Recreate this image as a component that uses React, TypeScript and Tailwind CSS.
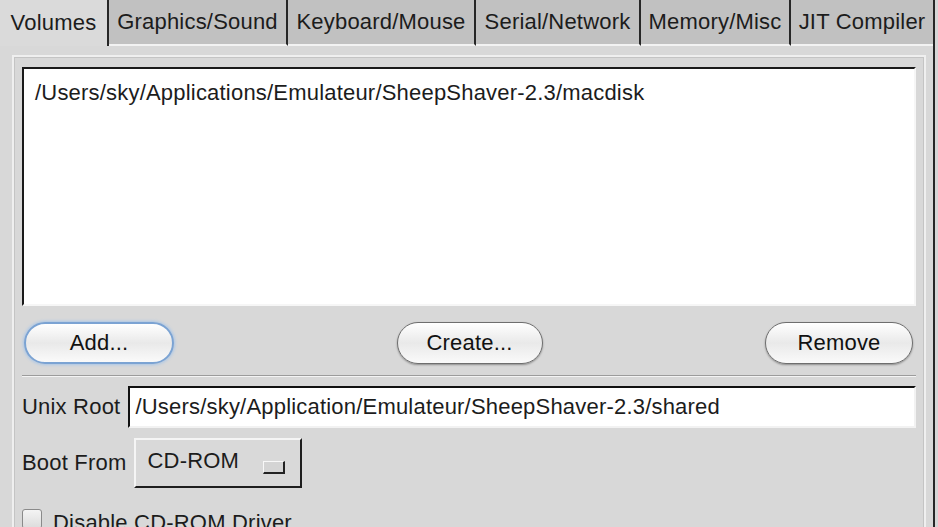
import React from "react";

const tabs = [
  { label: "Volumes", w: "w-[109px]", active: true },
  { label: "Graphics/Sound", w: "w-[179px]" },
  { label: "Keyboard/Mouse", w: "w-[188px]" },
  { label: "Serial/Network", w: "w-[165px]" },
  { label: "Memory/Misc", w: "w-[150px]" },
  { label: "JIT Compiler", w: "w-[142px]", last: true },
];

function AquaButton({
  label,
  focused,
  width,
}: {
  label: string;
  focused?: boolean;
  width: string;
}) {
  return (
    <div
      className={`${width} h-[42px] rounded-full flex items-center justify-center bg-gradient-to-b from-[#ffffff] via-[#e9e9e9] to-[#fafafa] ${
        focused
          ? "border-2 border-[#7ba3d3] shadow-[0_0_3px_1px_#a9c6e8]"
          : "border border-[#6e6e6e] shadow-[0_1px_2px_rgba(0,0,0,0.35)]"
      }`}
    >
      <span className="text-[#111]">{label}</span>
    </div>
  );
}

export default function App() {
  return (
    <div
      className="w-[938px] h-[527px] overflow-hidden bg-[#d6d6d6] text-[22px] tracking-[0.2px] leading-none text-[#1c1c1c]"
      style={{ fontFamily: '"Liberation Sans", Arial, sans-serif' }}
    >
      <div className="w-[935px] h-full border-r-2 border-[#262626] flex flex-col">
        {/* Tabs */}
        <div className="flex h-[46px] shrink-0">
          {tabs.map((t) => (
            <div
              key={t.label}
              className={`${t.w} h-full flex items-center justify-center ${
                t.last ? "" : "border-r-2 border-[#262626]"
              } ${
                t.active
                  ? "bg-[#dadada]"
                  : "bg-[#c1c1c1] border-b-2 border-b-[#f2f2f2]"
              }`}
            >
              {t.label}
            </div>
          ))}
        </div>

        {/* Panel */}
        <div className="flex-1 bg-[#d8d8d8] pl-[12px] pr-[7px] pt-[9px]">
          <div className="h-full border-2 border-b-0 border-[#efefef]">
            <div className="h-full border border-b-0 border-[#c4c4c4] px-[7px] pt-[9px]">
              {/* Volume list */}
              <div className="h-[239px] bg-white border-2 border-t-[#1a1a1a] border-l-[#1a1a1a] border-b-[#f6f6f6] border-r-[#f6f6f6] pl-[11px] pt-[13px]">
                /Users/sky/Applications/Emulateur/SheepShaver-2.3/macdisk
              </div>

              {/* Buttons */}
              <div className="flex justify-between items-center mt-[16px] pl-[2px] pr-[3px]">
                <AquaButton label="Add..." focused width="w-[150px]" />
                <AquaButton label="Create..." width="w-[146px]" />
                <AquaButton label="Remove" width="w-[148px]" />
              </div>

              {/* Separator */}
              <div className="mt-[11px] border-t border-[#9c9c9c] border-b border-b-[#f4f4f4]" />

              {/* Unix root */}
              <div className="flex items-center mt-[9px] gap-[8px]">
                <span>Unix Root</span>
                <div className="flex-1 h-[42px] bg-white flex items-center pl-[5px] border-2 border-t-[#111] border-l-[#111] border-b-[#f2f2f2] border-r-[#f2f2f2]">
                  /Users/sky/Application/Emulateur/SheepShaver-2.3/shared
                </div>
              </div>

              {/* Boot from */}
              <div className="flex items-center mt-[10px] gap-[7px]">
                <span>Boot From</span>
                <div className="w-[168px] h-[50px] bg-[#d9d9d9] flex items-center justify-between pl-[12px] pr-[15px] border-2 border-t-[#f5f5f5] border-l-[#f5f5f5] border-b-[#1e1e1e] border-r-[#1e1e1e]">
                  <span className="pb-[4px]">CD-ROM</span>
                  <div className="w-[22px] h-[13px] mt-[8px] bg-[#d4d4d4] border border-t-[#f8f8f8] border-l-[#f8f8f8] border-b-2 border-r-2 border-b-[#222] border-r-[#222]" />
                </div>
              </div>

              {/* Disable CD-ROM */}
              <div className="flex items-start mt-[21px] gap-[11px]">
                <div className="w-[20px] h-[20px] rounded-[3px] bg-gradient-to-b from-[#f4f4f4] to-[#dcdcdc] border border-[#8a8a8a]" />
                <span className="mt-[3px]">Disable CD-ROM Driver</span>
              </div>
            </div>
          </div>
        </div>
      </div>
    </div>
  );
}
